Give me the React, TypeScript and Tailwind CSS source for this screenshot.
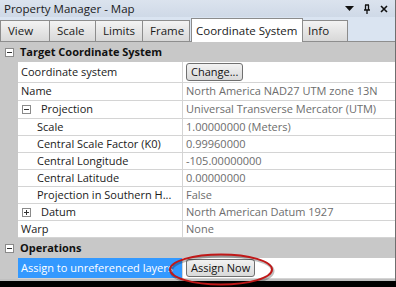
import React from "react";

const MinusBox = ({ plus = false }: { plus?: boolean }) => (
  <svg width="9" height="9" viewBox="0 0 9 9" className="shrink-0">
    <rect x="0.5" y="0.5" width="8" height="8" fill="#fff" stroke="#8a8a8a" />
    <line x1="2" y1="4.5" x2="7" y2="4.5" stroke="#333" />
    {plus && <line x1="4.5" y1="2" x2="4.5" y2="7" stroke="#333" />}
  </svg>
);

type RowProps = {
  label: string;
  value?: string;
  level?: number;
  toggle?: "minus" | "plus";
  h: string;
  button?: string;
  selected?: boolean;
};

const Row = ({ label, value, level = 0, toggle, h, button, selected }: RowProps) => (
  <div className={`flex ${h}`}>
    <div className="w-[18px] shrink-0 bg-[#c8c8c8]" />
    <div
      className={`w-[165px] shrink-0 flex items-center border-b border-r border-[#d4d4d4] whitespace-nowrap ${
        selected ? "bg-[#3399ff] text-white" : "text-[#1a1a1a]"
      }`}
    >
      {level === 0 && <span className="pl-[3px]">{label}</span>}
      {level === 1 && toggle && (
        <span className="flex items-center pl-[4px] gap-[10px]">
          <MinusBox plus={toggle === "plus"} />
          <span>{label}</span>
        </span>
      )}
      {level === 1 && !toggle && <span className="pl-[19px]">{label}</span>}
    </div>
    <div className="flex-1 min-w-0 flex items-center border-b border-[#d4d4d4] pl-[3px] text-[#6d6d6d] whitespace-nowrap">
      {button ? (
        <div className="h-[18px] px-[4px] flex items-center rounded-[3px] border border-[#707070] bg-gradient-to-b from-[#f2f2f2] to-[#d9d9d9] text-[#111]">
          {button}
        </div>
      ) : (
        value
      )}
    </div>
  </div>
);

const Header = ({ label }: { label: string }) => (
  <div className="flex items-center h-[20px] bg-[#c8c8c8]">
    <div className="w-[18px] flex justify-center shrink-0">
      <MinusBox />
    </div>
    <span className="font-bold text-[#111] pl-[2px]">{label}</span>
  </div>
);

export default function App() {
  const tabs = [
    { t: "View", w: "w-[50px]" },
    { t: "Scale", w: "w-[47px]" },
    { t: "Limits", w: "w-[48px]" },
    { t: "Frame", w: "w-[48px]" },
  ];
  return (
    <div
      className="relative w-[396px] h-[287px] bg-black overflow-hidden text-[11px]"
      style={{ fontFamily: '"Open Sans", "Noto Sans", sans-serif' }}
    >
      <div className="h-[281px] flex flex-col border-r border-[#6f6f6f] bg-[#d8e2ef]">
        {/* title bar */}
        <div className="h-[17px] flex items-center px-[4px] bg-gradient-to-b from-[#dbe3ee] to-[#cfd9e7] text-[#1a1a1a] text-[11.5px]">
          <span>Property Manager - Map</span>
          <div className="ml-auto flex items-center gap-[9px] pr-[3px]">
            <svg width="9" height="6" viewBox="0 0 9 6">
              <polygon points="0,0 9,0 4.5,5" fill="#111" />
            </svg>
            <svg width="8" height="10" viewBox="0 0 8 10">
              <path d="M2 1h4M2.5 1v5M5.5 1v5M1 6h6M4 6v4" stroke="#111" strokeWidth="1.3" fill="none" />
            </svg>
            <svg width="8" height="8" viewBox="0 0 8 8">
              <path d="M1 1l6 6M7 1l-6 6" stroke="#111" strokeWidth="1.6" />
            </svg>
          </div>
        </div>
        {/* tab strip */}
        <div className="h-[25px] flex items-end bg-[#dae4f1] border-b border-[#8e8e8e] text-[11.5px]">
          {tabs.map((tab) => (
            <div
              key={tab.t}
              className={`${tab.w} h-[21px] flex items-center pl-[7px] border border-b-0 border-[#8c8c8c] -mr-[1px] bg-gradient-to-b from-[#f3f3f3] to-[#d8d8d8] text-[#1a1a1a]`}
            >
              {tab.t}
            </div>
          ))}
          <div className="w-[2px]" />
          <div className="w-[112px] h-[24px] flex items-center pl-[4px] border border-b-0 border-[#8c8c8c] bg-white text-[#1a1a1a] -mb-[1px] relative z-10">
            Coordinate System
          </div>
          <div className="w-[45px] h-[21px] flex items-center pl-[5px] border border-b-0 border-l-0 border-[#8c8c8c] bg-gradient-to-b from-[#f3f3f3] to-[#d8d8d8] text-[#1a1a1a]">
            Info
          </div>
        </div>
        {/* grid */}
        <div className="flex-1 flex flex-col bg-white border-b-2 border-[#c0c0c0]">
          <Header label="Target Coordinate System" />
          <Row h="h-[21px]" label="Coordinate system" button="Change..." />
          <Row h="h-[18px]" label="Name" value="North America NAD27 UTM zone 13N" />
          <Row h="h-[18px]" label="Projection" level={1} toggle="minus" value="Universal Transverse Mercator (UTM)" />
          <Row h="h-[17px]" label="Scale" level={1} value="1.00000000 (Meters)" />
          <Row h="h-[17px]" label="Central Scale Factor (K0)" level={1} value="0.99960000" />
          <Row h="h-[17px]" label="Central Longitude" level={1} value="-105.00000000" />
          <Row h="h-[17px]" label="Central Latitude" level={1} value="0.00000000" />
          <Row h="h-[17px]" label="Projection in Southern H..." level={1} value="False" />
          <Row h="h-[17px]" label="Datum" level={1} toggle="plus" value="North American Datum 1927" />
          <Row h="h-[17px]" label="Warp" value="None" />
          <Header label="Operations" />
          <Row h="h-[21px]" label="Assign to unreferenced layers" button="Assign Now" selected />
        </div>
      </div>
      <svg className="absolute left-0 top-0 pointer-events-none" width="396" height="287">
        <ellipse cx="222" cy="271" rx="51" ry="15" fill="none" stroke="#000" strokeOpacity="0.25" strokeWidth="3" />
        <ellipse cx="221" cy="269.5" rx="51" ry="15" fill="none" stroke="#c01818" strokeWidth="2" />
      </svg>
    </div>
  );
}
